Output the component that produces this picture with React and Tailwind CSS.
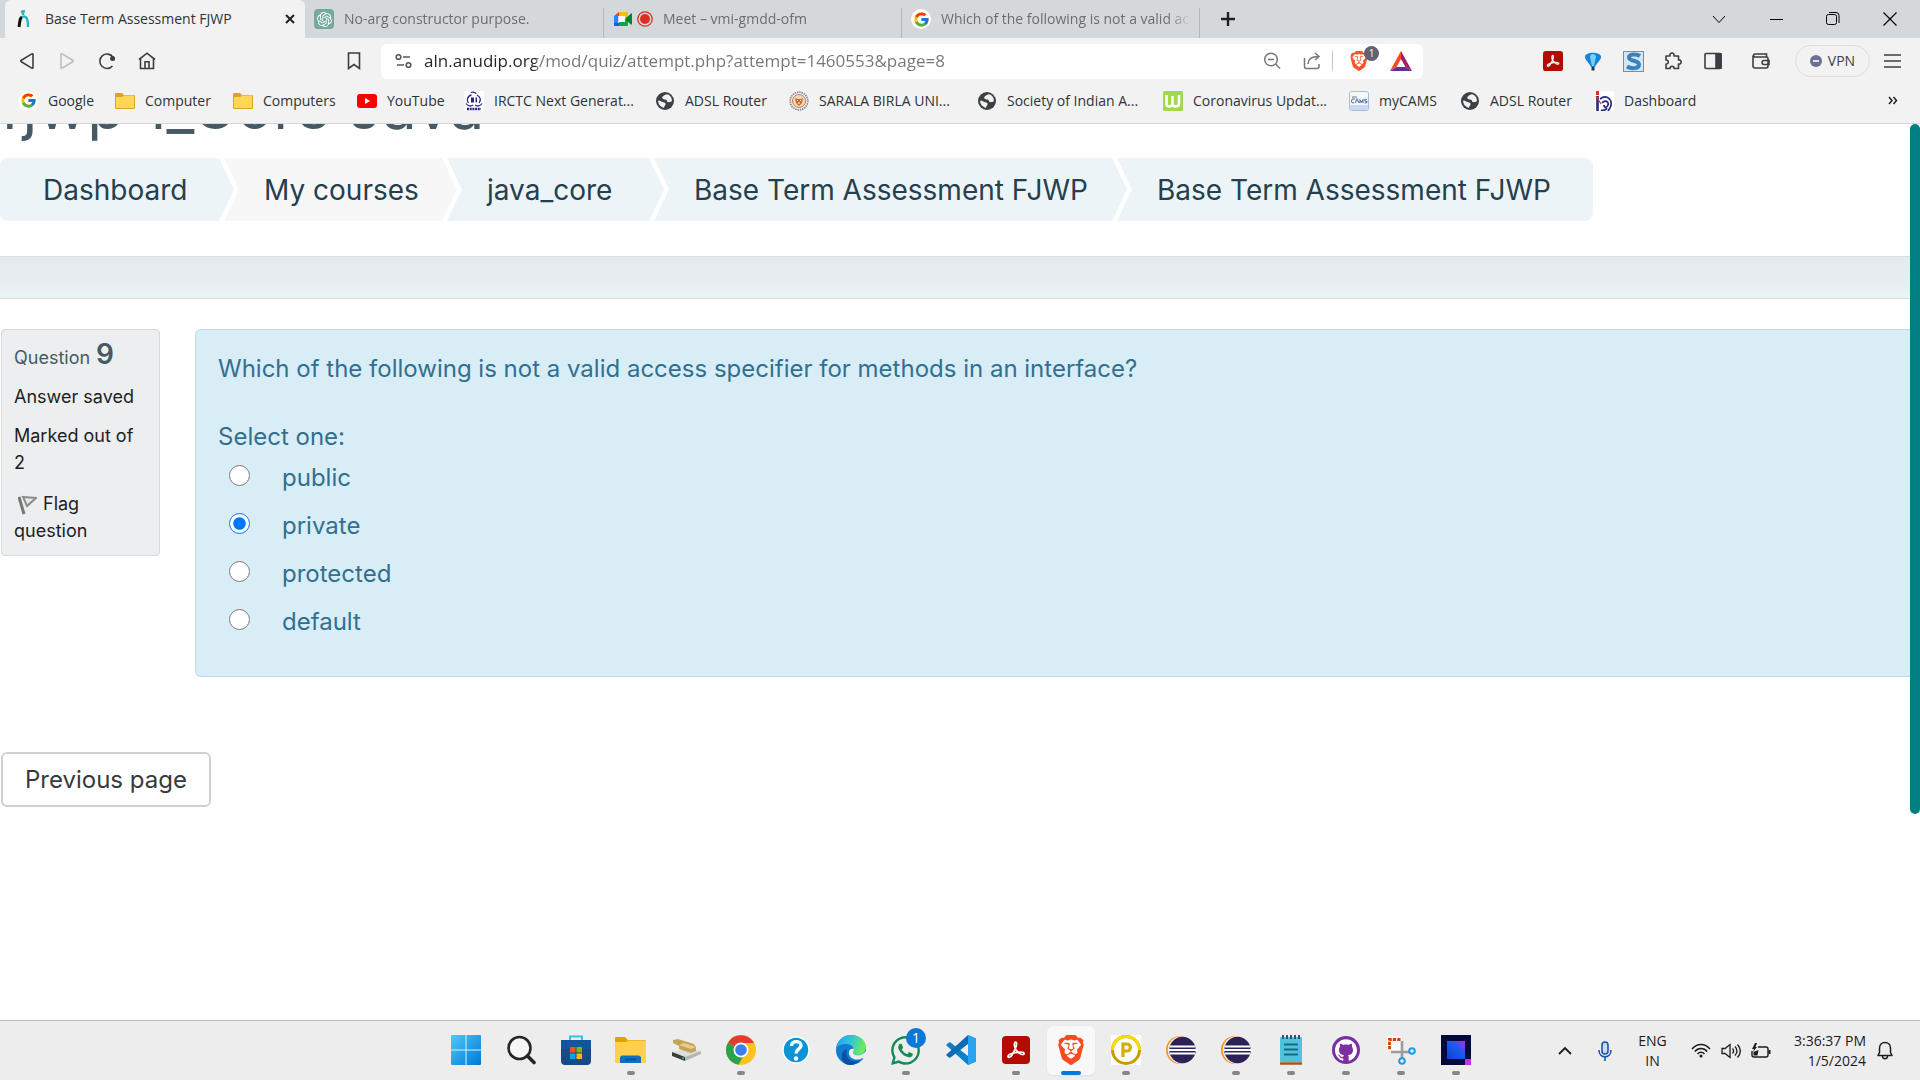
import { FcGoogle } from "react-icons/fc";
import { SiBrave, SiOpenai, SiGithub } from "react-icons/si";
import { FaWhatsapp } from "react-icons/fa";

const ui = "font-['Open_Sans','Noto_Sans',sans-serif]";

/* ---------- site icons ---------- */

const Anudip = () => (
  <svg width="14" height="20" viewBox="0 0 14 20" fill="none" strokeWidth="2.4">
    <path d="M2 18C3 11 3 9 5 8" stroke="#111" strokeWidth="3" />
    <path d="M5 8c5-2 6 3 6 10" stroke="#2bb5bd" />
    <path d="M4 3l4-1M6 2v4" stroke="#2bb5bd" strokeWidth="2.600" />
  </svg>
);

const ChatGpt = () => (
  <span className="flex size-5 items-center justify-center rounded-sm bg-[#74aa9c] text-white">
    <SiOpenai size={15} />
  </span>
);

const Meet = () => (
  <svg width="20" height="16" viewBox="0 0 20 16">
    <path d="M1 5l5-4v4z" fill="#ea4335" />
    <path d="M6 1h8a1 1 0 011 1v4l-3 2V5H6z" fill="#fbbc04" />
    <path d="M1 5h4v7H1z" fill="#2684fc" />
    <path d="M1 12h5v3H2a1 1 0 01-1-1z" fill="#0066da" />
    <path d="M6 5h6v6H6z" fill="#fff" />
    <path d="M6 11h6V8l3 2v4a1 1 0 01-1 1H6z" fill="#00ac47" />
    <path d="M12 8l6-5.500c.5-.4 1-.1 1 .5v10c0 .6-.5.900-1 .5z" fill="#00832d" />
  </svg>
);

const Recording = () => (
  <svg width="16" height="16" viewBox="0 0 16 16">
    <circle cx="8" cy="8" r="7.200" fill="none" stroke="#d93025" strokeWidth="1.300" />
    <circle cx="8" cy="8" r="5" fill="#d93025" />
  </svg>
);

const GoogleBadge = () => (
  <span className="flex size-5 items-center justify-center rounded-full bg-white">
    <FcGoogle size={17} />
  </span>
);

const BookmarkFolder = () => (
  <svg width="20" height="18" viewBox="0 0 20 18">
    <path d="M0 2a1 1 0 011-1h6l2 2h10a1 1 0 011 1v12a1 1 0 01-1 1H1a1 1 0 01-1-1z" fill="#dba520" />
    <path d="M1 5h6l2-1.500h10V16H1z" fill="#ffd655" />
  </svg>
);

const YouTube = () => (
  <svg width="20" height="14" viewBox="0 0 20 14">
    <rect width="20" height="14" rx="3" fill="#f00" />
    <path d="M8 4l5 3-5 3z" fill="#fff" />
  </svg>
);

const Irctc = () => (
  <svg width="20" height="20" viewBox="0 0 20 20">
    <rect width="20" height="20" fill="#fff" />
    <g fill="none" stroke="#26268a" strokeWidth="1.300">
      <path d="M7 1.500c2-1 5 0 5 1.500M7.500 4C3 5 2.500 10 4.500 12M13 4c4 2 4 6 2 8" />
      <path d="M2 12.500c2 3 5 3 7 1.500M18 12.500c-2 3-5 3-7 1.500" />
    </g>
    <path d="M7 6.500h3v5H7zM11.500 6.500h1.500v5h-1.500z" fill="#26268a" />
    <path d="M3 18h14" stroke="#26268a" strokeWidth="2.500" strokeDasharray="2 .7" />
  </svg>
);

const Globe = () => (
  <svg width="18" height="18" viewBox="0 0 18 18">
    <circle cx="9" cy="9" r="9" fill="#3c4043" />
    <path
      d="M10.500 2.200c-1.500.8-3 1.200-4 2.600-.8 1.200.2 2.600 1.700 2.600 1.700 0 2.800.4 2.800 1.700 0 1.100 1 1.200 2.200 1 1.300-.3 2.300-.2 2.700-1.400C16 5 13.500 2.500 10.500 2.200zM2.200 8.500c-.3 3.500 2.300 6.600 5.800 7.300.6-.9.300-2 1.300-2.800.9-.8 0-2.300-1.200-2.500C6 10.200 4.500 8.700 2.200 8.500z"
      fill="#f2f2f2"
    />
  </svg>
);

const Sarala = () => (
  <svg width="20" height="20" viewBox="0 0 20 20" fill="none">
    <circle cx="10" cy="10" r="8.800" stroke="#8d8a96" strokeWidth="1.800" strokeDasharray="1.500 .8" />
    <circle cx="10" cy="10" r="6.500" fill="#f4d3b8" stroke="#c9804d" />
    <path d="M6 7l2 1h4l2-1-1 5-3 3-3-3z" fill="#cf6a2b" />
    <path d="M8 9.500h1M11 9.500h1M9 12h2" stroke="#fff" />
  </svg>
);

const Worldometer = () => (
  <svg width="20" height="20" viewBox="0 0 20 20">
    <rect width="20" height="20" rx="1.500" fill="#a0d94a" />
    <path d="M3.500 4v8.500c0 4 6 4 6 0V5v7.500c0 4 6.500 4 6.500 0V4" fill="none" stroke="#fff" strokeWidth="2.600" />
  </svg>
);

const Cams = () => (
  <svg width="20" height="20" viewBox="0 0 20 20">
    <rect x=".5" y=".5" width="19" height="19" rx="2" fill="#f6f8fc" stroke="#a9bbdf" />
    <path d="M1 14h18v5H1z" fill="#ccd8ef" />
    <path d="M6 8c-4-1-5 4-1 4M6 12l2-4 2 4M11 12V9l1.500 2L14 9v3M18 8.500c-3-1-3 1.500-1 1.700 2 .3 1 2.300-1.500 1.500" fill="none" stroke="#5b74b4" strokeWidth="1.100" />
    <path d="M3 6h5" stroke="#777" />
  </svg>
);

const DashboardIcon = () => (
  <svg width="20" height="20" viewBox="0 0 20 20" fill="none">
    <rect x="1" width="19" height="20" fill="#fff" />
    <path d="M3.500 5v15" stroke="#29297f" strokeWidth="2.600" />
    <path d="M3.500 0v4" stroke="#e0301e" strokeWidth="3" />
    <path d="M2 5l5 8" stroke="#e0301e" strokeWidth="1.300" />
    <path d="M6 8c6-5 12 0 11 6 0 3-2 4-3 6M8 12c3-4 7-1 6 2s-4 3-4 0M7 19c2 1 5 0 6-2" stroke="#29297f" strokeWidth="1.700" />
  </svg>
);

/* ---------- browser chrome ---------- */

const tabs = [
  { title: "Base Term Assessment FJWP", icon: <Anudip />, active: true },
  { title: "No-arg constructor purpose.", icon: <ChatGpt /> },
  { title: "Meet – vmi-gmdd-ofm", icon: <><Meet /><Recording /></>, line: true },
  { title: "Which of the following is not a valid access specifier", icon: <GoogleBadge />, line: true },
];

function Tab({ title, icon, active, line }) {
  if (active)
    return (
      <div className="flex w-[300px] items-center rounded-t-md bg-[#f2f2f2] pr-1.5 pl-3">
        <button className="flex min-w-0 flex-1 items-center gap-3.5">
          {icon}
          <span className="truncate text-[#2f3337]">{title}</span>
        </button>
        <button aria-label="Close tab" className="p-1">
          <svg width="10" height="10" viewBox="0 0 10 10" stroke="#202124" strokeWidth="2">
            <path d="M1 1l8 8M9 1l-8 8" />
          </svg>
        </button>
      </div>
    );
  return (
    <button
      className={
        "mt-2 flex w-[298px] min-w-0 items-start gap-2.5 pt-px pl-[9px] pr-2 text-left text-[#6a6e72] " +
        (line ? "border-l border-[#b4b8bb]" : "")
      }
    >
      <span className="flex h-5 shrink-0 items-center gap-1">{icon}</span>
      <span className="flex-1 overflow-hidden whitespace-nowrap [mask-image:linear-gradient(90deg,#000_calc(100%-24px),transparent)]">
        {title}
      </span>
    </button>
  );
}

function TabStrip() {
  return (
    <div className="flex h-[38px] bg-[#d4d8db] pl-[5px] text-sm">
      {tabs.map((t) => (
        <Tab key={t.title} {...t} />
      ))}
      <div className="mt-2 border-l border-[#b4b8bb]" />
      <button aria-label="New tab" className="px-5">
        <svg width="16" height="16" viewBox="0 0 16 16" stroke="#202124" strokeWidth="2.400">
          <path d="M8 1v14M1 8h14" />
        </svg>
      </button>
      <div className="ml-auto flex text-black">
        <button aria-label="Search tabs" className="w-[57px] pl-5">
          <svg width="14" height="9" viewBox="0 0 14 9" fill="none" stroke="currentColor">
            <path d="M1 1l6 6.500L13 1" />
          </svg>
        </button>
        <button aria-label="Minimize" className="w-[57px] pl-5">
          <svg width="14" height="10" viewBox="0 0 14 10" stroke="currentColor">
            <path d="M1 5.500h13" />
          </svg>
        </button>
        <button aria-label="Restore" className="w-[57px] pl-5">
          <svg width="14" height="14" viewBox="0 0 14 14" fill="none" stroke="currentColor">
            <rect x=".5" y="2.500" width="10" height="10" rx="2" />
            <path d="M3 .5h7a3 3 0 013 3V11" />
          </svg>
        </button>
        <button aria-label="Close" className="w-[57px] pl-5">
          <svg width="14" height="14" viewBox="0 0 14 14" stroke="currentColor" strokeWidth="1.200">
            <path d="M.5.5l13 13M13.500.5l-13 13" />
          </svg>
        </button>
      </div>
    </div>
  );
}

const slot = "flex w-10 justify-center";

function Toolbar() {
  return (
    <div className="flex h-[46px] items-center bg-[#f2f2f2] pl-[7px] text-[#3b3e42]">
      <button aria-label="Back" className={slot}>
        <svg width="16" height="18" viewBox="0 0 16 18" fill="none" stroke="currentColor" strokeWidth="1.600">
          <path d="M14 2.500v13c0 .8-.6 1-1.200.6L2.300 9.800c-.7-.4-.7-1.200 0-1.600L12.800 1.900c.6-.4 1.200-.2 1.200.6z" />
        </svg>
      </button>
      <button aria-label="Forward" disabled className={slot}>
        <svg width="16" height="18" viewBox="0 0 16 18" fill="none" stroke="#bdbdbf" strokeWidth="1.600">
          <path d="M2 2.500v13c0 .8.6 1 1.200.6l10.500-6.300c.7-.4.7-1.200 0-1.600L3.200 1.900C2.600 1.500 2 1.700 2 2.500z" />
        </svg>
      </button>
      <button aria-label="Reload" className={slot}>
        <svg width="18" height="18" viewBox="0 0 18 18" fill="none" stroke="currentColor" strokeWidth="1.600">
          <path d="M14.500 14A7.200 7.200 0 1115 5.200" />
          <circle cx="14.600" cy="6.500" r="1.700" fill="currentColor" />
        </svg>
      </button>
      <button aria-label="Home" className={slot}>
        <svg width="18" height="18" viewBox="0 0 18 18" fill="none" stroke="currentColor" strokeWidth="1.600">
          <path d="M1 7.500L9 1.200l8 6.300M2.500 6.500v10h13v-10M7 16.500V9.800h4v6.700" />
        </svg>
      </button>
      <button aria-label="Bookmark this page" className="ml-[167px] flex w-10 justify-center">
        <svg width="14" height="18" viewBox="0 0 14 18" fill="none" stroke="currentColor" strokeWidth="1.600">
          <path d="M1.500 1h11v15.500L7 12.500l-5.500 4z" />
        </svg>
      </button>
      <div className="ml-[7px] flex h-[35px] max-w-[1042px] flex-1 items-center rounded-md bg-white pr-0.5 pl-3.5">
        <svg width="17" height="16" viewBox="0 0 17 16" fill="none" stroke="#55585c" strokeWidth="1.600">
          <circle cx="3.500" cy="4" r="2.300" />
          <path d="M8 4h7M2 12h7" />
          <circle cx="13.500" cy="12" r="2.300" />
        </svg>
        <input
          aria-label="Address"
          defaultValue="aln.anudip.org/mod/quiz/attempt.php?attempt=1460553&page=8"
          className="ml-3 min-w-0 flex-1 bg-[linear-gradient(90deg,#222529_112px,#72767a_112px)] bg-clip-text text-[17px] text-transparent outline-none"
        />
        <button aria-label="Zoom" className={slot}>
          <svg width="18" height="18" viewBox="0 0 18 18" fill="none" stroke="#74777b" strokeWidth="1.500">
            <circle cx="8" cy="7.500" r="6.300" />
            <path d="M5 7.500h6M12.500 12l4.500 4.500" />
          </svg>
        </button>
        <button aria-label="Share" className={slot}>
          <svg width="18" height="18" viewBox="0 0 18 18" fill="none" stroke="#74777b" strokeWidth="1.500">
            <path d="M1.500 6v8.500c0 1.500.7 2 2 2H14c1.400 0 2-.6 2-2V12M5 12c.2-5 3-7.500 10-7.500M12 1l4 3.500L12 8" />
          </svg>
        </button>
        <div className="h-5 w-px bg-[#c4c6c8]" />
        <button aria-label="Brave Shields" className="relative flex w-12 justify-center pr-3 text-[#fb542b]">
          <SiBrave size={22} className="relative ml-4" />
          <span className="absolute -top-1 right-0.5 flex h-[15px] w-[15px] items-center justify-center rounded-full bg-[#5f6373] text-[10px] text-white">
            1
          </span>
        </button>
        <button aria-label="Rewards" className="flex w-10 justify-center">
          <svg width="22" height="20" viewBox="0 0 22 20">
            <path d="M11 0L0 20l6.500-4L11 8z" fill="#ff4724" />
            <path d="M11 0l11 20-6.500-4L11 8z" fill="#9e1f63" />
            <path d="M0 20h22l-6.500-4h-9z" fill="#662d91" />
          </svg>
        </button>
      </div>
      <div className="ml-auto flex items-center pr-2">
        <button aria-label="Adobe Acrobat" className={slot}>
          <Acrobat size={20} />
        </button>
        <button aria-label="Balloon" className={slot}>
          <svg width="18" height="19" viewBox="0 0 18 19">
            <path d="M1 4.500C2-.5 16-.5 17 4.500c.5 3-4 6-6 10.500H7C5 10.500.5 7.500 1 4.500z" fill="#1385d8" />
            <path d="M6 5c0-4 6-4 6 0L10 14H8z" fill="#7dccf8" />
            <path d="M7.500 15h3v3.500h-3z" fill="#173a56" />
          </svg>
        </button>
        <button aria-label="S extension" className={slot}>
          <svg width="21" height="21" viewBox="0 0 21 21">
            <rect x=".5" y=".5" width="20" height="20" fill="#d6e6f3" stroke="#5c97c4" />
            <path d="M17 5c-3-2-11-2.500-11 1.500S16 9 16 13.500 8 18 4 15.500" fill="none" stroke="#3c82b8" strokeWidth="4" />
          </svg>
        </button>
        <button aria-label="Extensions" className={slot}>
          <svg width="18" height="18" viewBox="0 0 18 18" fill="none" stroke="currentColor" strokeWidth="1.600">
            <path d="M2 4h4c-1-4 5-4 4 0h4.500v4c3.500-.8 3.500 5 0 4v4.500H10c.8-3-4.500-3-4 0H2V12c3 .6 3-4.500 0-4z" strokeLinejoin="round" />
          </svg>
        </button>
        <button aria-label="Side panel" className={slot}>
          <svg width="18" height="18" viewBox="0 0 18 18" fill="none" stroke="currentColor" strokeWidth="1.600">
            <rect x="1" y="1.500" width="16" height="15" rx="1" />
            <path d="M12 2h5v14h-5z" fill="currentColor" />
          </svg>
        </button>
        <button aria-label="Wallet" className="mr-3.5 ml-2 flex w-10 justify-center">
          <svg width="18" height="18" viewBox="0 0 18 18" fill="none" stroke="currentColor" strokeWidth="1.600">
            <path d="M1 3.500V14c0 1.400.8 2 2 2h11c1.300 0 2-.7 2-2V6.500c0-1-.6-1.500-1.500-1.500H3C1 5 1 2 3 2h11.500v3" />
            <path d="M17 8.500h-5c-2.500 0-2.500 4 0 4h5z" />
          </svg>
        </button>
        <button className="flex h-8 w-[75px] items-center justify-center gap-1.5 rounded-full border border-[#dedfe1] text-sm">
          <svg width="12" height="12" viewBox="0 0 12 12">
            <circle cx="6" cy="6" r="6" fill="#6b7094" />
            <path d="M3 6h6" stroke="#fff" strokeWidth="1.600" />
          </svg>
          VPN
        </button>
        <button aria-label="Menu" className="ml-0.5 flex w-10 justify-center">
          <svg width="17" height="14" viewBox="0 0 17 14" stroke="currentColor" strokeWidth="1.400">
            <path d="M0 1h17M0 7h17M0 13h17" />
          </svg>
        </button>
      </div>
    </div>
  );
}

const bookmarks = [
  ["Google", <GoogleBadge />, "w-[97px]"],
  ["Computer", <BookmarkFolder />, "w-[118px]"],
  ["Computers", <BookmarkFolder />, "w-[124px]"],
  ["YouTube", <YouTube />, "w-[107px]"],
  ["IRCTC Next Generat...", <Irctc />, "w-[191px]"],
  ["ADSL Router", <Globe />, "w-[134px]"],
  ["SARALA BIRLA UNI...", <Sarala />, "w-[188px]"],
  ["Society of Indian A...", <Globe />, "w-[186px]"],
  ["Coronavirus Updat...", <Worldometer />, "w-[186px]"],
  ["myCAMS", <Cams />, "w-[111px]"],
  ["ADSL Router", <Globe />, "w-[134px]"],
  ["Dashboard", <DashboardIcon />, "w-[110px]"],
];

function BookmarksBar() {
  return (
    <nav className="flex h-10 items-center border-b border-[#d3d5d7] bg-[#f2f2f2] pb-1.5 pl-[18px] text-sm text-[#2f3337]">
      {bookmarks.map(([label, icon, width], i) => (
        <a key={i} href="#" className={"flex shrink-0 items-center gap-2.5 whitespace-nowrap " + width}>
          <span className="flex w-5 justify-center">{icon}</span>
          {label}
        </a>
      ))}
      <button aria-label="More bookmarks" className="mr-[22px] ml-auto">
        <svg width="10" height="9" viewBox="0 0 10 9" fill="none" stroke="#202124" strokeWidth="1.500">
          <path d="M1 1l3 3.500L1 8M5.500 1l3 3.500-3 3.500" />
        </svg>
      </button>
    </nav>
  );
}

/* ---------- quiz page ---------- */

const crumbs = [
  ["Dashboard", "w-[234px] pl-[43px] bg-[#ecf4f8] rounded-l-lg [clip-path:polygon(0_0,calc(100%-15px)_0,100%_50%,calc(100%-15px)_100%,0_100%)]"],
  ["My courses", "w-[233px] -ml-[10px] pl-10 bg-[#f7f7f7] [clip-path:polygon(0_0,calc(100%-15px)_0,100%_50%,calc(100%-15px)_100%,0_100%,15px_50%)]"],
  ["java_core", "w-[217px] -ml-[10px] pl-10 bg-[#ecf4f8] [clip-path:polygon(0_0,calc(100%-15px)_0,100%_50%,calc(100%-15px)_100%,0_100%,15px_50%)]"],
  ["Base Term Assessment FJWP", "w-[473px] -ml-[10px] pl-10 bg-[#ecf4f8] [clip-path:polygon(0_0,calc(100%-15px)_0,100%_50%,calc(100%-15px)_100%,0_100%,15px_50%)]"],
  ["Base Term Assessment FJWP", "w-[476px] -ml-[10px] pl-10 bg-[#ecf4f8] rounded-r-lg [clip-path:polygon(0_0,100%_0,100%_100%,0_100%,15px_50%)]"],
];

function Quiz() {
  return (
    <main className="min-w-0 flex-1 bg-white font-['Inter',sans-serif]">
      <div className="flex h-[34px] items-end overflow-hidden pb-[21px]">
        <h1 className="text-[61px] leading-[60px] whitespace-nowrap text-[#455a64]">fjwp 1_Core Java</h1>
      </div>
      <nav className="flex h-[63px] text-[28px] text-[#263f4d]">
        {crumbs.map(([label, cls], i) => (
          <a key={i} href="#" className={"flex shrink-0 items-center whitespace-nowrap " + cls}>
            {label}
          </a>
        ))}
      </nav>
      <div className="mt-[35px] h-[43px] border-y border-[#d5dee2] bg-linear-to-b from-[#e4eaee] to-[#eaf2f5]" />
      <div className="mt-[30px] ml-px flex items-start gap-[35px]">
        <aside className="flex w-[159px] shrink-0 flex-col gap-3 rounded-sm border border-[#d6dadd] bg-[#eceeef] py-[11px] pr-4 pl-3 text-lg leading-[27px] text-[#1d2125]">
          <h2 className="flex items-baseline gap-1.5 text-[#455a64]">
            Question <span className="text-[28px] font-semibold leading-[27px]">9</span>
          </h2>
          <div>Answer saved</div>
          <div>Marked out of 2</div>
          <a href="#" className="mt-0.5">
            <svg className="mr-1.5 ml-1 inline" width="19" height="20" viewBox="0 0 19 20" fill="none">
              <path d="M1 2l5 17" stroke="#777" strokeWidth="3" />
              <path d="M5 2l13 1-9 8z" fill="#e8e8e8" stroke="#8c8c8c" strokeWidth="2" />
            </svg>
            Flag question
          </a>
        </aside>
        <form className="flex-1 rounded-l-md border border-r-0 border-[#b8def0] bg-[#d9edf7] px-[22px] pt-[21px] pb-9 text-2xl leading-9 text-[#31708f]">
          <p>Which of the following is not a valid access specifier for methods in an interface?</p>
          <fieldset className="mt-8">
            <legend>Select one:</legend>
            <div className="mt-[5px] flex flex-col gap-3">
              {["public", "private", "protected", "default"].map((o) => (
                <label key={o} className="ml-[11px] flex items-start gap-8">
                  <input type="radio" name="answer" defaultChecked={o === "private"} className="mt-[5px] size-[21px]" />
                  {o}
                </label>
              ))}
            </div>
          </fieldset>
        </form>
      </div>
      <button className="mt-[75px] ml-px h-[55px] rounded-md border-2 border-[#ced0d2] bg-white px-[22px] text-2xl text-[#373a3c]">
        Previous page
      </button>
    </main>
  );
}

/* ---------- taskbar ---------- */

function Acrobat({ size }) {
  return (
    <svg width={size} height={size} viewBox="0 0 28 28">
      <rect width="28" height="28" rx="4" fill="#b30b00" />
      <path
        d="M13.500 6c2.500 0 .5 7-3.500 13-1.500 2.500-4 3-4 1.500 0-2.500 8-4.500 13-4.500 4 0 4 3 1 2.500-4-.8-8.500-7-7.500-11 .2-1 .5-1.500 1-1.500z"
        fill="none"
        stroke="#fff"
        strokeWidth="1.700"
      />
    </svg>
  );
}

const Eclipse = () => (
  <svg width="30" height="30" viewBox="0 0 30 30">
    <circle cx="14" cy="15" r="14" fill="#f7941e" />
    <circle cx="15.500" cy="15" r="13.800" fill="#eee" />
    <circle cx="16.500" cy="15" r="13.200" fill="#2c2255" />
    <path d="M4 11.500h25M3 15h27M4 18.500h25" stroke="#fff" strokeWidth="1.800" />
  </svg>
);

const apps = [
  ["Start",
    <svg width="30" height="30" viewBox="0 0 30 30">
      <defs>
        <linearGradient id="win" x1="0" y1="0" x2="1" y2="1">
          <stop offset="0" stopColor="#4cc9fb" />
          <stop offset="1" stopColor="#0078d4" />
        </linearGradient>
      </defs>
      <path d="M1 0h13.500v14.500H0V1a1 1 0 011-1zM15.500 0H29a1 1 0 011 1v13.500H15.500zM0 15.500h14.500V30H1a1 1 0 01-1-1zM15.500 15.500H30V29a1 1 0 01-1 1H15.500z" fill="url(#win)" />
    </svg>],
  ["Search",
    <svg width="30" height="30" viewBox="0 0 30 30" fill="none" stroke="#262626" strokeLinecap="round">
      <circle cx="13.500" cy="13" r="11" strokeWidth="2.600" fill="#f6f6f6" />
      <path d="M21.500 21l6.500 6.500" strokeWidth="3.600" />
    </svg>],
  ["Microsoft Store",
    <svg width="30" height="30" viewBox="0 0 30 30">
      <path d="M9 7V1.500h12V7" fill="none" stroke="#31c4f3" strokeWidth="2" />
      <path d="M0 5h30v21c0 2.500-1.500 4-4 4H4c-2.500 0-4-1.500-4-4z" fill="#174a86" />
      <path d="M0 5h30v9H0z" fill="#0f5cab" opacity=".7" />
      <path d="M9 12h5.500v5.500H9z" fill="#f25022" />
      <path d="M15.500 12H21v5.500h-5.500z" fill="#7fba00" />
      <path d="M9 18.500h5.500V24H9z" fill="#00a4ef" />
      <path d="M15.500 18.500H21V24h-5.500z" fill="#ffb900" />
    </svg>],
  ["File Explorer",
    <svg width="31" height="28" viewBox="0 0 31 28">
      <path d="M0 2a1 1 0 011-1h9l3 3h17a1 1 0 011 1v4H0z" fill="#e2a100" />
      <path d="M0 6h11l2-1.500h18V27H0z" fill="#ffd04a" />
      <path d="M5 27v-5c0-1.500 1-2.500 2.500-2.500h16c1.500 0 2.500 1 2.500 2.500v5z" fill="#0f6fc2" />
      <path d="M10 23.500h11" stroke="#0a4d8c" strokeWidth="1.500" />
    </svg>, "dot"],
  ["Drive tool",
    <svg width="30" height="24" viewBox="0 0 30 24">
      <path d="M1 14l16-4 13 3-16 6z" fill="#ddd" />
      <path d="M1 14l13 5v4L1 18z" fill="#3b3b3b" />
      <path d="M14 19l16-6v3l-16 7z" fill="#b5b5b5" />
      <path d="M2 2l5-1 16 5 2 3v4l-5 2-12-4V8L2 5z" fill="#c5a459" />
      <path d="M8 7l5-2 12 4-5 2z" fill="#e6cd8d" />
      <circle cx="12" cy="20" r="1" fill="#3c3" />
    </svg>],
  ["Google Chrome",
    <svg width="30" height="30" viewBox="0 0 30 30">
      <circle cx="15" cy="15" r="15" fill="#fcc31e" />
      <path d="M15 15L2 7.500A15 15 0 0012.500 29.800L19 18z" fill="#2ba24c" />
      <path d="M15 15L2 7.500A15 15 0 0128 8H15z" fill="#e33b2e" />
      <circle cx="15" cy="15" r="7.500" fill="#fff" />
      <circle cx="15" cy="15" r="5.800" fill="#3a7ded" />
    </svg>, "dot"],
  ["Get Help",
    <svg width="28" height="28" viewBox="0 0 28 28">
      <circle cx="14" cy="14" r="13" fill="#0a94d8" stroke="#fff" strokeWidth="1.500" />
      <path d="M9.500 10c0-6 9.500-5.500 9.500-.5 0 3.500-5 3.500-5 8" fill="none" stroke="#fff" strokeWidth="3.400" />
      <circle cx="14" cy="22.500" r="2.200" fill="#fff" />
    </svg>],
  ["Microsoft Edge",
    <svg width="30" height="30" viewBox="0 0 30 30">
      <defs>
        <linearGradient id="edge" x1="0" y1="0" x2="1" y2=".3">
          <stop offset="0" stopColor="#1aa1e3" />
          <stop offset=".5" stopColor="#2fc2df" />
          <stop offset="1" stopColor="#69eb5c" />
        </linearGradient>
      </defs>
      <circle cx="15" cy="15" r="15" fill="#0f7cd4" />
      <path d="M0 14C1 5 8 0 15 0c9 0 15 6 15 12 0 5-4 8-8 8-3 0-5-1-5-2 0-1 1-1 1-3 0-3-3-6-8-6-5 0-9 2-10 5z" fill="url(#edge)" />
      <path d="M11 14c-3 8 4 15 13 11-3 4-7 5-10 5-6 0-9-5-8-10 0-3 2-5 5-6z" fill="#0c4f9e" />
      <path d="M17 18c0 2 6 4 11 0l2-2v9l-3-2c-7 4-15 0-14-6 0-2 2-4 5-3 0 2-1 3-1 4z" fill="#ededed" />
    </svg>],
  ["WhatsApp",
    <span className="relative text-[#168a57]">
      <FaWhatsapp size={33} />
      <span className="absolute -top-1.5 -right-1 flex size-5 items-center justify-center rounded-full bg-[#0a78d4] text-sm text-white">1</span>
    </span>, "dot"],
  ["Visual Studio Code",
    <svg width="30" height="30" viewBox="0 0 30 30">
      <path d="M22 0l8 3.500v23L22 30 1 11c-1-1-1-1 0-2l2-1.500c.5-.3 1-.3 1.500 0L22 21z" fill="#0b7fc7" />
      <path d="M22 0L1 19c-1 1-1 1 0 2l2 1.500c.5.300 1 .3 1.500 0L22 9z" fill="#0a6cb3" />
      <path d="M22 0l8 3.500v23L22 30z" fill="#28a5ee" />
    </svg>],
  ["Adobe Acrobat", <Acrobat size={28} />, "dot"],
  ["Brave",
    <span className="relative flex text-[#fb4b1e]">
      <svg className="absolute top-1 left-1" width="22" height="22" viewBox="0 0 22 22">
        <circle cx="11" cy="10" r="8" fill="#fff" />
      </svg>
      <SiBrave size={30} className="relative" />
    </span>, "active"],
  ["P app",
    <svg width="30" height="30" viewBox="0 0 30 30">
      <path d="M0 0h30v30H0z" fill="#fff" />
      <circle cx="15" cy="15" r="13.500" fill="#fff" stroke="#c79a00" strokeWidth="3" />
      <path d="M1.500 15a13.500 13.500 0 0127 0" fill="none" stroke="#f8dc00" strokeWidth="3" />
      <path d="M12 22V9h4c4.500 0 4.500 7 0 7h-4" fill="none" stroke="#d5ae00" strokeWidth="3.200" />
    </svg>, "dot"],
  ["Eclipse", <Eclipse />],
  ["Eclipse workspace", <Eclipse />, "dot"],
  ["Notepad",
    <svg width="24" height="30" viewBox="0 0 24 30">
      <rect x="1" y="2" width="22" height="25" rx="1" fill="#50c3dc" />
      <path d="M1 28.500h22" stroke="#a5561c" strokeWidth="2.500" />
      <path d="M4 0v4M8 0v4M12 0v4M16 0v4M20 0v4" stroke="#155f78" strokeWidth="2" />
      <path d="M5 9.500h14M5 14.500h14M5 19.500h14" stroke="#146a83" strokeWidth="1.800" />
    </svg>, "dot"],
  ["GitHub Desktop",
    <span className="flex size-7 items-center justify-center rounded-full bg-[#7b2fa0] text-white">
      <SiGithub size={22} />
    </span>, "dot"],
  ["Snipping Tool",
    <svg width="30" height="30" viewBox="0 0 30 30" fill="none">
      <path d="M1 1h15v15H1z" fill="#fafafa" />
      <path d="M14.500 4.500h-11v11" stroke="#d83b01" strokeWidth="2.800" strokeDasharray="3.200 1.200" />
      <path d="M16 6v17M5 17h18" stroke="#9a9da0" strokeWidth="2.600" />
      <circle cx="16" cy="26" r="2.800" stroke="#1c9be6" strokeWidth="2" />
      <circle cx="26" cy="16" r="2.800" stroke="#1c9be6" strokeWidth="2" />
    </svg>, "dot"],
  ["Recorder",
    <svg width="30" height="30" viewBox="0 0 30 30">
      <defs>
        <linearGradient id="rec" x1="0" y1="1" x2="1" y2="0">
          <stop offset="0" stopColor="#0b3fd0" />
          <stop offset=".6" stopColor="#1b5cf0" />
          <stop offset="1" stopColor="#b528e8" />
        </linearGradient>
      </defs>
      <path d="M0 0h30v30H0z" fill="#020a3c" />
      <path d="M6 6h18v18H6z" fill="url(#rec)" />
      <path d="M24 24h6v6h-6z" fill="#c531e6" />
    </svg>, "dot"],
];

function Taskbar() {
  return (
    <footer className="flex h-[60px] shrink-0 items-center border-t border-[#b9b9b9] bg-[#ededed] text-[#1c1c1c]">
      <div className="flex flex-1 justify-end">
        {apps.map(([name, icon, state]) => (
          <button key={name} aria-label={name} className="flex w-[55px] justify-center">
            <span
              className={
                "flex h-[49px] w-12 flex-col items-center justify-end rounded-md " +
                (state === "active" ? "bg-[#f8f8f8] shadow-xs" : "")
              }
            >
              <span className="flex h-[38px] items-center">{icon}</span>
              <span
                className={
                  "mt-0.5 h-1 rounded-full " +
                  (state === "active" ? "w-5 bg-[#0a78d4]" : state === "dot" ? "w-2 bg-[#868686]" : "w-2")
                }
              />
            </span>
          </button>
        ))}
      </div>
      <div className="ml-[62px] flex items-center text-sm leading-5">
        <button aria-label="Show hidden icons" className={slot}>
          <svg width="14" height="9" viewBox="0 0 14 9" fill="none" stroke="currentColor" strokeWidth="1.800">
            <path d="M1 8l6-6 6 6" />
          </svg>
        </button>
        <button aria-label="Microphone" className={slot}>
          <svg width="14" height="20" viewBox="0 0 14 20" fill="none" stroke="#1757a8" strokeWidth="1.600">
            <rect x="4" y="1" width="6" height="12" rx="3" fill="#c5dcf3" />
            <path d="M1 9c0 9 12 9 12 0M7 16v4" />
          </svg>
        </button>
        <button className="w-[55px] text-center">
          ENG
          <br />
          IN
        </button>
        <button aria-label="Network, volume and battery" className="flex items-center gap-2.5 pl-[11px]">
          <svg width="20" height="15" viewBox="0 0 20 15" fill="none" stroke="currentColor" strokeWidth="1.500">
            <path d="M1 6c5-6 13-6 18 0M3.800 8.500c3.500-4 9-4 12.400 0M6.500 11c2-2.300 5-2.300 7 0" />
            <circle cx="10" cy="13" r="1.500" fill="currentColor" stroke="none" />
          </svg>
          <svg width="20" height="18" viewBox="0 0 20 18" fill="none" stroke="currentColor" strokeWidth="1.300">
            <path d="M1 6.500v5h3l5 4v-13l-5 4zM11.500 6.500c1.300 1.500 1.300 3.500 0 5M14 4.500c2.500 2.800 2.500 6.200 0 9M16.500 2.500c3.500 4 3.500 9 0 13" />
          </svg>
          <svg width="20" height="16" viewBox="0 0 20 16" fill="none" stroke="currentColor" strokeWidth="1.400">
            <path d="M7 4h8c1.400 0 2 .6 2 2v6c0 1.400-.6 2-2 2H3c-1.400 0-2-.6-2-2V8" />
            <path d="M2.500 12.500V9l5-2-1 5.500zM4 0L1 6h2l-1 3 4-5H4.500L6 0z" fill="currentColor" stroke="none" />
            <path d="M18.500 7v4" strokeWidth="2" />
          </svg>
        </button>
        <button className="ml-[11px] w-[84px] text-right whitespace-nowrap">
          3:36:37 PM
          <br />
          1/5/2024
        </button>
        <button aria-label="Notifications" className="flex w-[54px] pl-[11px]">
          <svg width="16" height="19" viewBox="0 0 16 19" fill="none" stroke="currentColor" strokeWidth="1.500">
            <path d="M1 14.500h14l-1.500-3V7c0-7.500-11-7.500-11 0v4.500zM5.500 15c0 3.500 5 3.500 5 0" strokeLinejoin="round" />
          </svg>
        </button>
      </div>
    </footer>
  );
}

export default function App() {
  return (
    <div className={"flex h-screen flex-col overflow-hidden bg-white " + ui}>
      <header>
        <TabStrip />
        <Toolbar />
        <BookmarksBar />
      </header>
      <div className="flex min-h-0 flex-1 overflow-hidden">
        <Quiz />
        <div className="w-[10px] shrink-0">
          <div className="h-[77%] rounded-full bg-[#008080]" />
        </div>
      </div>
      <Taskbar />
    </div>
  );
}
